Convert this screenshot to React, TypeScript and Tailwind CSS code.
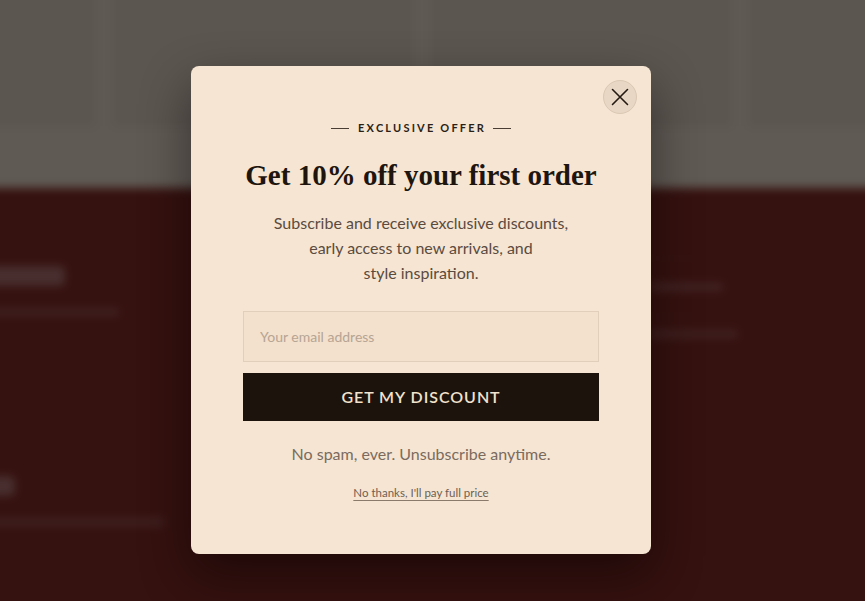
import { useState } from 'react';

const SANS = { fontFamily: 'Lato, "Open Sans", sans-serif' };
const SERIF = { fontFamily: '"Liberation Serif", "DejaVu Serif", serif' };

function BackgroundPage() {
  return (
    <div className="absolute -inset-[24px] overflow-hidden blur-[5px] bg-[#852b26]" style={SANS}>
      {/* product grid */}
      <div className="h-[212px] bg-[#efe0d1] pt-0">
        <div className="flex gap-[18px] -ml-[181px] h-[150px]">
          {[0, 1, 2, 3].map((i) => (
            <div key={i} className="w-[300px] shrink-0 bg-[#e5d6c7]" />
          ))}
        </div>
      </div>
      {/* footer */}
      <div className="h-[440px] bg-[#852b26] relative">
        <div className="flex justify-between">
          <div className="pt-[78px] -ml-[6px] w-[220px]">
            <div className="h-[20px] w-[95px] bg-[#b57676] rounded" />
            <div className="mt-[22px] h-[8px] w-[150px] bg-[#a05656] rounded" />
            <div className="mt-[160px] h-[20px] w-[45px] bg-[#b57676] rounded" />
            <div className="mt-[22px] h-[8px] w-[195px] bg-[#a05656] rounded" />
          </div>
          <div className="pt-[70px] w-[250px]">
            <div className="h-px bg-[#94413b]" />
            <div className="mt-[24px] ml-[10px] h-[8px] w-[75px] bg-[#a65c5c] rounded" />
            <div className="mt-[24px] h-px bg-[#94413b]" />
            <div className="mt-[14px] ml-[10px] h-[8px] w-[90px] bg-[#a05656] rounded" />
          </div>
        </div>
      </div>
    </div>
  );
}

function CloseIcon() {
  return (
    <svg width="18" height="18" viewBox="0 0 18 18" fill="none" stroke="#241a12" strokeWidth="1.6" strokeLinecap="round">
      <path d="M1.5 1.5 L16.5 16.5 M16.5 1.5 L1.5 16.5" />
    </svg>
  );
}

export default function App() {
  const [email, setEmail] = useState('');

  return (
    <div className="relative w-[865px] h-[601px] overflow-hidden bg-[#852b26]">
      <BackgroundPage />
      <div className="absolute inset-0 bg-black/60" />

      <div className="absolute inset-0 flex items-start pl-[191px] pt-[66px]">
        <div
          className="relative w-[460px] h-[488px] rounded-lg bg-[#f5e5d2] shadow-[0_20px_50px_rgba(0,0,0,0.45)] px-[52px] pt-[54px] text-center"
          style={SANS}
        >
          <button className="absolute top-[14px] right-[14px] w-[34px] h-[34px] rounded-full bg-[#e8d7c4] border border-[#dac8b4] flex items-center justify-center">
            <CloseIcon />
          </button>

          <div className="flex items-center justify-center gap-[7px] h-[16px]">
            <span className="block w-[18px] h-px bg-[#4a3d33]" />
            <span className="text-[11px] leading-[16px] font-bold tracking-[0.2em] text-[#2a1f16] pl-[0.2em]">EXCLUSIVE OFFER</span>
            <span className="block w-[18px] h-px bg-[#4a3d33]" />
          </div>

          <h1 className="mt-[22px] text-[29px] leading-[35px] font-bold text-[#1e150e]" style={SERIF}>
            Get 10% off your first order
          </h1>

          <p className="mt-[17px] text-[16px] leading-[25px] text-[#5b4b3f]">
            Subscribe and receive exclusive discounts,<br />
            early access to new arrivals, and<br />
            style inspiration.
          </p>

          <input
            value={email}
            onChange={(e) => setEmail(e.target.value)}
            placeholder="Your email address"
            className="mt-[26px] block w-full h-[51px] px-4 bg-[#f3e0cd] border border-[#e2cfbb] text-[14px] text-[#2a1f16] placeholder:text-[#b6a593] outline-none"
            style={SANS}
          />

          <button className="mt-[11px] block w-full h-[48px] bg-[#1c130c] text-[#f2e2cd] text-[16px] font-semibold tracking-[0.06em]">
            GET MY DISCOUNT
          </button>

          <p className="mt-[21px] text-[16px] leading-[24px] text-[#7b6b5e]">No spam, ever. Unsubscribe anytime.</p>

          <div className="mt-[17px] leading-[16px]">
            <a href="#" className="text-[11.5px] text-[#6f5f52] underline underline-offset-[3px] decoration-[#8a7a6c]">
              No thanks, I'll pay full price
            </a>
          </div>
        </div>
      </div>
    </div>
  );
}
